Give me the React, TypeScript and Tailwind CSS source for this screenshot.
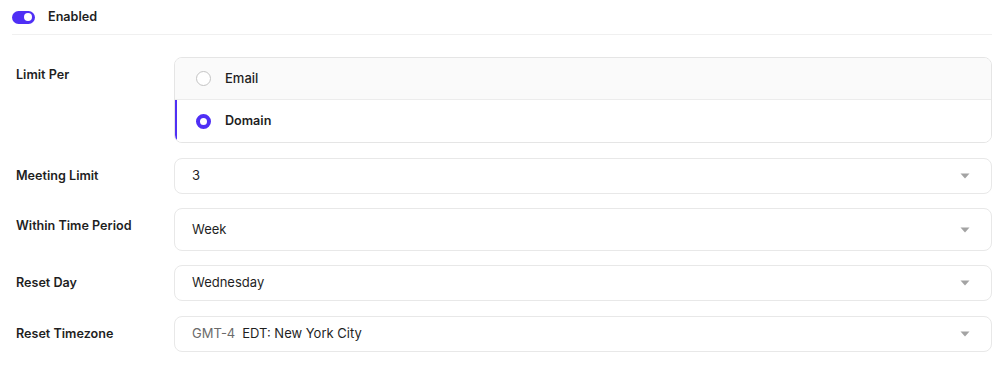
const Caret = () => (
  <svg width="10" height="6" viewBox="0 0 10 6" className="shrink-0">
    <path d="M0.5 0.5h9L5 5.5z" fill="#a3a3a3" />
  </svg>
);

const SelectBox = ({ value, prefix, tall }: { value: string; prefix?: string; tall?: boolean }) => (
  <div
    className={`flex items-center justify-between rounded-lg border border-[#e8e8e8] bg-white pl-[17px] pr-[21px] ${
      tall ? "h-[43px]" : "h-[36px]"
    }`}
  >
    <span className="text-[13px] text-[#1f1f1f]">
      {prefix && <span className="mr-[7px] text-[#6b6b6b]">{prefix}</span>}
      {value}
    </span>
    <Caret />
  </div>
);

const Row = ({ label, children, className }: { label: string; children: React.ReactNode; className?: string }) => (
  <div className={`flex ${className ?? ""}`}>
    <div className="w-[162px] shrink-0 pl-1 pt-[9px] text-[12.6px] font-semibold text-[#1f1f1f]">{label}</div>
    <div className="flex-1">{children}</div>
  </div>
);

export default function App() {
  return (
    <div className="h-[365px] w-full bg-white pl-3 pr-[11px] font-['Inter',sans-serif]">
      <div className="flex h-[35px] items-center gap-[13px] border-b border-[#f0f0f0]">
        <div className="relative h-[13px] w-[23px] rounded-full bg-[#4f2ff5]">
          <div className="absolute right-[3px] top-[2.5px] h-[8px] w-[8px] rounded-full bg-white" />
        </div>
        <span className="text-[12.6px] font-semibold text-[#1f1f1f]">Enabled</span>
      </div>

      <div className="flex flex-col gap-[14px] pt-[22px]">
        <Row label="Limit Per">
          <div className="overflow-hidden rounded-lg border border-[#e5e5e5]">
            <div className="flex h-[42px] items-center gap-[14px] border-b border-[#ececec] bg-[#fafafa] pl-[21px]">
              <span className="h-[15px] w-[15px] rounded-full border-[1.5px] border-[#c4c4c4] bg-white" />
              <span className="text-[13px] font-medium text-[#1f1f1f]">Email</span>
            </div>
            <div className="flex h-[42px] items-center gap-[14px] border-l-2 border-[#4f2ff5] bg-white pl-[19px]">
              <span className="h-[15px] w-[15px] rounded-full border-[4px] border-[#4f2ff5] bg-white" />
              <span className="text-[12.6px] font-semibold text-[#1f1f1f]">Domain</span>
            </div>
          </div>
        </Row>
        <Row label="Meeting Limit" className="mt-px">
          <SelectBox value="3" />
        </Row>
        <Row label="Within Time Period">
          <SelectBox value="Week" tall />
        </Row>
        <Row label="Reset Day">
          <SelectBox value="Wednesday" />
        </Row>
        <Row label="Reset Timezone" className="mt-px">
          <SelectBox value="EDT: New York City" prefix="GMT-4" />
        </Row>
      </div>
    </div>
  );
}
